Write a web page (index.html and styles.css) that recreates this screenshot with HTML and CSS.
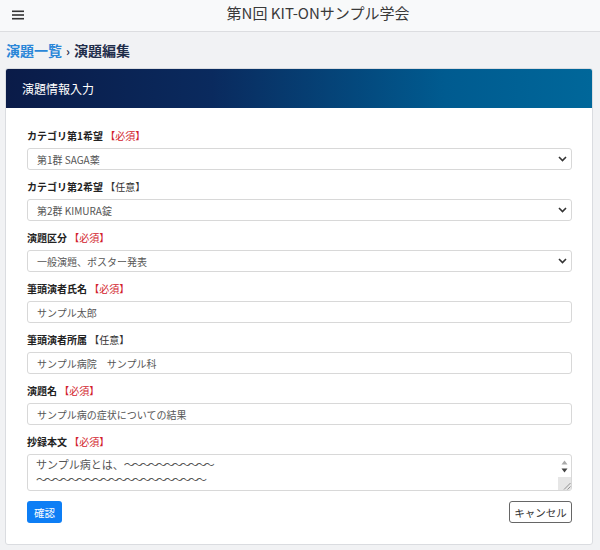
FILE: index.html
```html
<!DOCTYPE html>
<html lang="ja">
<head>
<meta charset="utf-8">
<link rel="stylesheet" href="styles.css">
</head>
<body>
<header class="topbar">
  <span class="menu"><svg width="12" height="10" viewBox="0 0 12 10"><rect x="0" y="0.5" width="12" height="1.6" fill="#333"/><rect x="0" y="4.2" width="12" height="1.6" fill="#333"/><rect x="0" y="7.9" width="12" height="1.6" fill="#333"/></svg></span>
  <h1 class="title">第N回 KIT-ONサンプル学会</h1>
</header>
<nav class="crumbs"><a class="crumb-link">演題一覧</a><span class="sep">›</span><span class="crumb-cur">演題編集</span></nav>
<section class="card">
  <div class="card-head">演題情報入力</div>
  <form class="card-body">
    <div class="group">
      <label class="lbl">カテゴリ第1希望 <span class="req">【必須】</span></label>
      <div class="sel-wrap"><div class="ctl">第1群 SAGA薬</div><svg class="chev" width="9" height="6" viewBox="0 0 9 6"><path d="M1 1 L4.5 4.5 L8 1" fill="none" stroke="#333" stroke-width="1.6"/></svg></div>
    </div>
    <div class="group">
      <label class="lbl">カテゴリ第2希望 <span class="opt">【任意】</span></label>
      <div class="sel-wrap"><div class="ctl">第2群 KIMURA錠</div><svg class="chev" width="9" height="6" viewBox="0 0 9 6"><path d="M1 1 L4.5 4.5 L8 1" fill="none" stroke="#333" stroke-width="1.6"/></svg></div>
    </div>
    <div class="group">
      <label class="lbl">演題区分 <span class="req">【必須】</span></label>
      <div class="sel-wrap"><div class="ctl">一般演題、ポスター発表</div><svg class="chev" width="9" height="6" viewBox="0 0 9 6"><path d="M1 1 L4.5 4.5 L8 1" fill="none" stroke="#333" stroke-width="1.6"/></svg></div>
    </div>
    <div class="group">
      <label class="lbl">筆頭演者氏名 <span class="req">【必須】</span></label>
      <div class="ctl">サンプル太郎</div>
    </div>
    <div class="group">
      <label class="lbl">筆頭演者所属 <span class="opt">【任意】</span></label>
      <div class="ctl">サンプル病院　サンプル科</div>
    </div>
    <div class="group">
      <label class="lbl">演題名 <span class="req">【必須】</span></label>
      <div class="ctl">サンプル病の症状についての結果</div>
    </div>
    <div class="group">
      <label class="lbl">抄録本文 <span class="req">【必須】</span></label>
      <div class="ta-wrap">
        <div class="ta-text"><div class="ta-line">サンプル病とは、<span class="wave">～～～～～～～～～～～</span></div><div class="ta-line"><span class="wave">～～～～～～～～～～～～～～～～～～～～～</span></div></div>
        <div class="ta-bar">
          <svg width="7" height="5" viewBox="0 0 7 5"><path d="M0.5 4.5 L3.5 0.5 L6.5 4.5Z" fill="#aaa"/></svg>
          <svg width="7" height="5" viewBox="0 0 7 5"><path d="M0.5 0.5 L3.5 4.5 L6.5 0.5Z" fill="#444"/></svg>
          <span class="grip"><svg width="9" height="9" viewBox="0 0 9 9"><path d="M8.5 2 L2 8.5 M8.5 5.5 L5.5 8.5" stroke="#888" stroke-width="0.9"/></svg></span>
        </div>
      </div>
    </div>
    <div class="actions">
      <button type="button" class="btn-primary">確認</button>
      <button type="button" class="btn-cancel">キャンセル</button>
    </div>
  </form>
</section>
</body>
</html>
```
FILE: styles.css
```css
* { box-sizing: border-box; }
body {
  margin: 0;
  background: #f1f2f4;
  font-family: "Noto Sans CJK JP", "Noto Sans", sans-serif;
  color: #333;
}
.topbar {
  height: 32px;
  background: #f8f9fa;
  border-bottom: 1px solid #dcdde0;
  display: flex;
  align-items: center;
  padding-left: 12px;
}
.menu { display: flex; width: 12px; position: relative; top: -1px; }
.title {
  flex: 1;
  margin: 0;
  text-align: center;
  font-size: 15px;
  font-weight: 400;
  color: #3a3a3a;
  padding-left: 12px;
  line-height: 1;
  position: relative;
  top: -3px;
}
.crumbs {
  height: 36px;
  display: flex;
  align-items: center;
  padding-left: 6px;
  font-size: 14px;
  font-weight: 700;
}
.crumb-link { color: #2a86d8; }
.sep { color: #1f2d4a; margin: 0 4px 0 4px; font-size: 12px; }
.crumb-cur { color: #1f2d4a; }
.card {
  margin-left: 5px;
  width: 588px;
  background: #fff;
  border: 1px solid #dadce0;
  border-radius: 3px;
  overflow: hidden;
}
.card-head {
  height: 39px;
  background: linear-gradient(to right, #0a1b48 0%, #0a2a5e 35%, #005b90 75%, #00679a 100%);
  color: #fff;
  font-size: 12px;
  display: flex;
  align-items: center;
  padding-left: 16px;
}
.card-body {
  padding: 20px 20px 21px 21px;
  display: flex;
  flex-direction: column;
}
.group { display: flex; flex-direction: column; margin-bottom: 9px; }
.lbl {
  height: 16px;
  line-height: 16px;
  font-size: 10px;
  font-weight: 700;
  color: #222;
  margin-bottom: 4px;
}
.req { color: #d2222d; font-weight: 400; }
.opt { color: #333; font-weight: 400; }
.ctl {
  height: 22px;
  border: 1px solid #d8d8d8;
  border-radius: 3px;
  font-size: 10px;
  color: #555;
  display: flex;
  align-items: center;
  padding-left: 9px;
  background: #fff;
}
.sel-wrap { position: relative; }
.chev { position: absolute; right: 5px; top: 8px; }
.ta-wrap {
  height: 37px;
  border: 1px solid #d8d8d8;
  border-radius: 3px;
  display: flex;
  background: #fff;
}
.ta-text {
  flex: 1;
  font-size: 11px;
  color: #555;
  padding: 2px 0 0 8px;
  overflow: hidden;
  white-space: nowrap;
  display: flex;
  flex-direction: column;
}
.ta-line { height: 15px; line-height: 15px; }
.wave { letter-spacing: -3px; }
.ta-bar {
  width: 13px;
  display: flex;
  flex-direction: column;
  align-items: center;
  padding-top: 5px;
  gap: 3px;
}
.grip {
  margin-top: auto;
  width: 13px;
  height: 13px;
  background: #e6e6e6;
  display: flex;
  align-items: flex-end;
  justify-content: flex-end;
}
.actions {
  display: flex;
  justify-content: space-between;
  margin-top: 1px;
}
.btn-primary {
  height: 22px;
  width: 35px;
  background: #0d7ef5;
  border: none;
  border-radius: 3px;
  color: #fff;
  font-family: inherit;
  font-size: 10.5px;
  padding: 0;
}
.btn-cancel {
  height: 22px;
  width: 63px;
  background: #fff;
  border: 1px solid #666;
  border-radius: 3px;
  color: #333;
  font-family: inherit;
  font-size: 10.5px;
  padding: 0;
}
```
